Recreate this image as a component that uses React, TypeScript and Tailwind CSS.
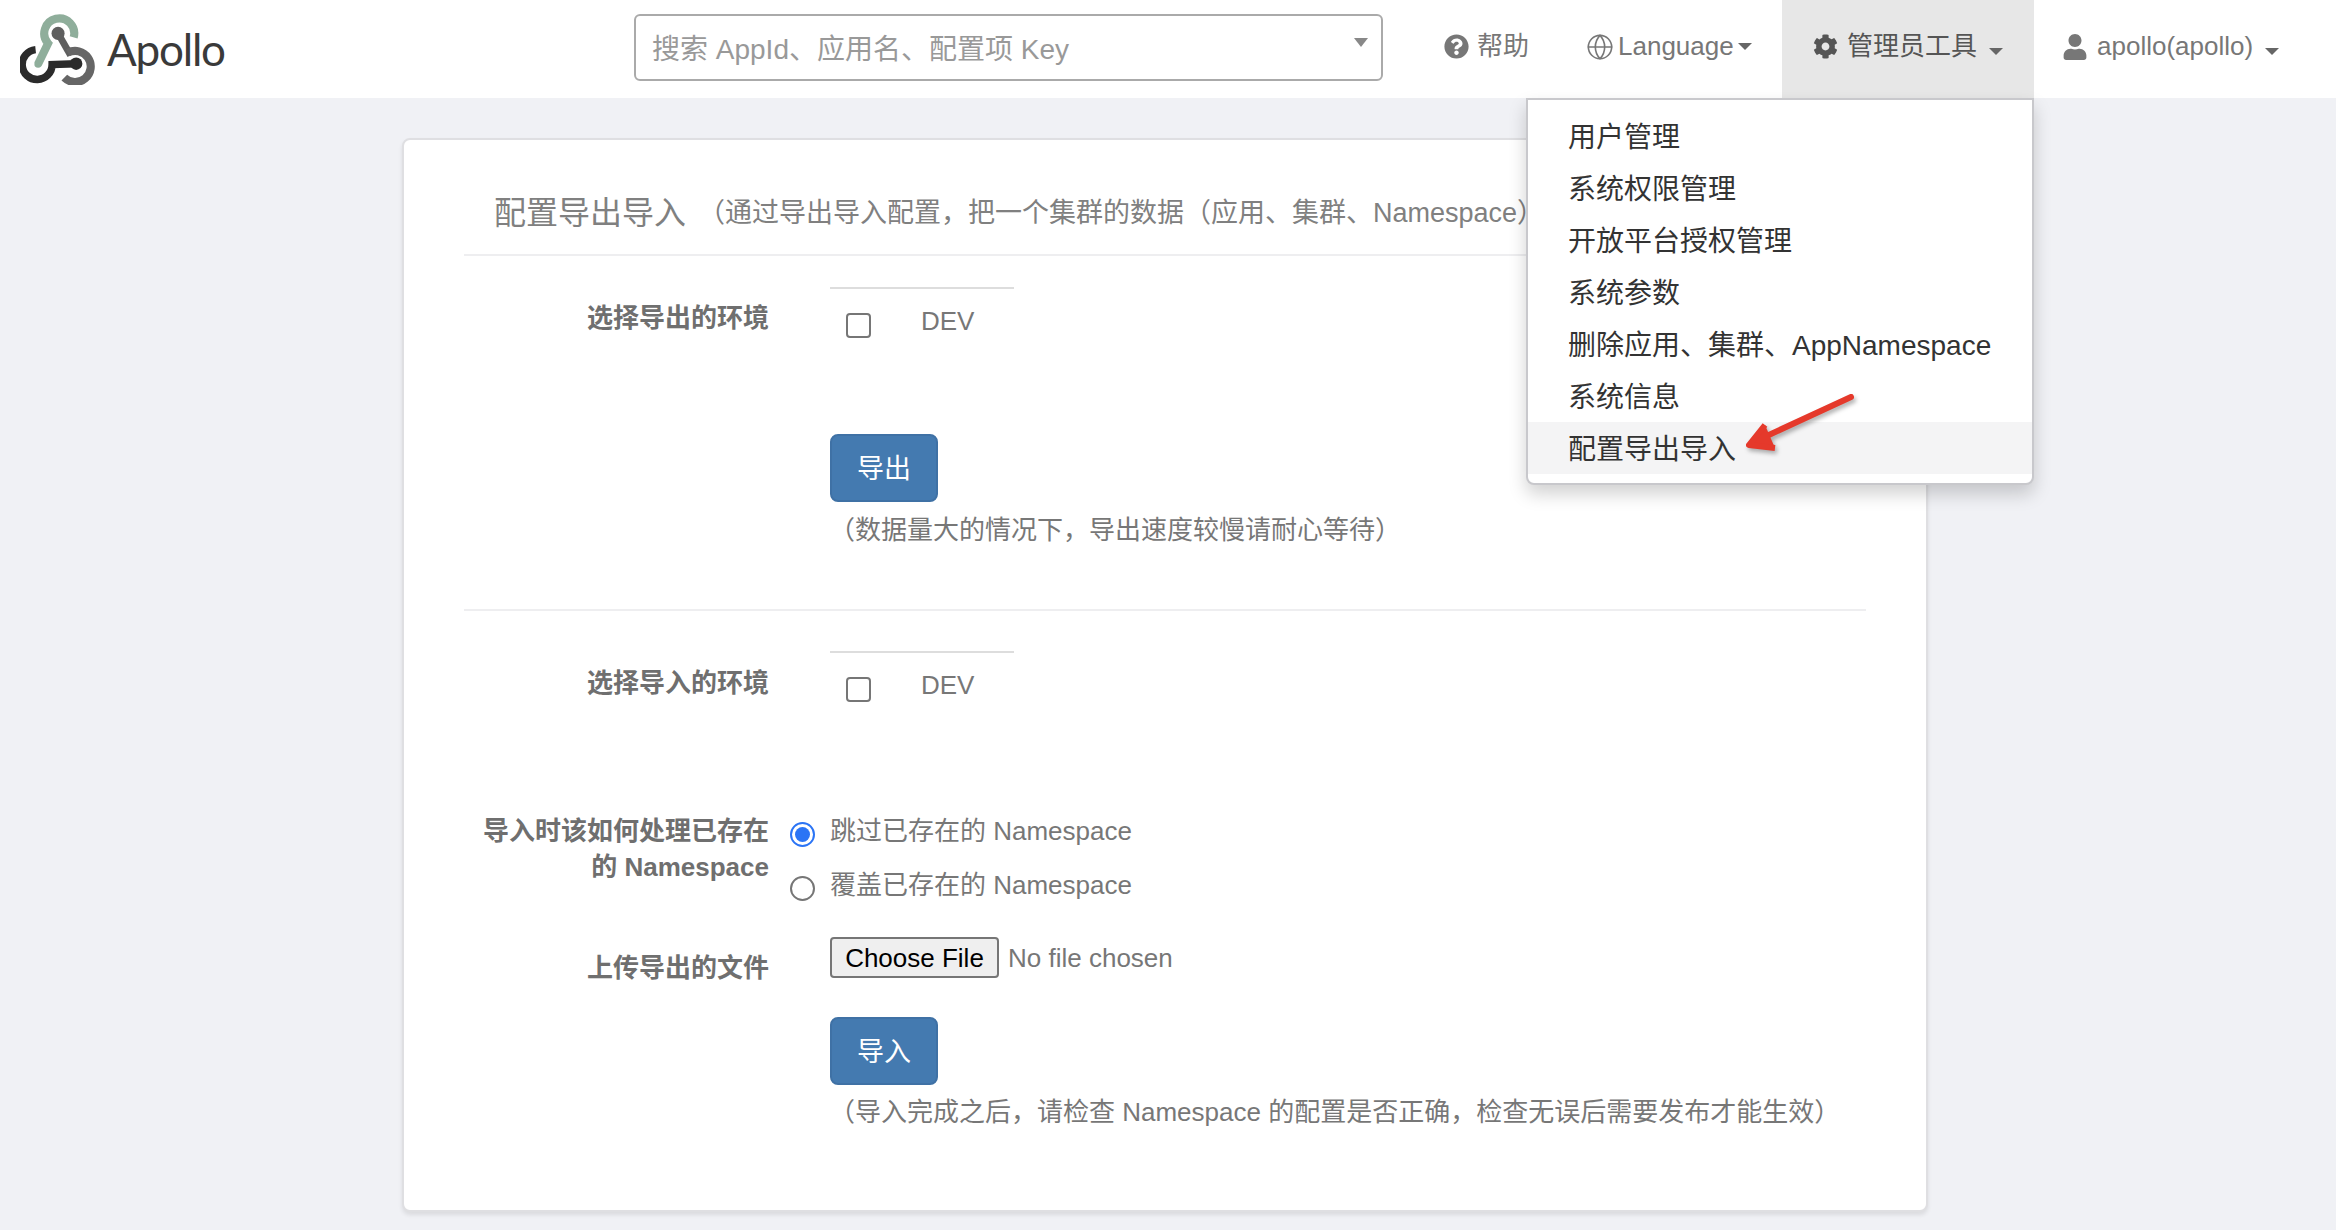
import React from "react";
import { FaQuestionCircle, FaCog, FaUser } from "react-icons/fa";
import { Globe } from "lucide-react";

const Caret = () => (
  <span className="inline-block w-0 h-0 border-x-[7px] border-x-transparent border-t-[7px] border-t-[#666]" />
);

const Logo = () => (
  <svg width="78" height="72" viewBox="50 25 250 230" fill="none">
    <path d="M222 103 A48 48 0 1 0 140 122 L108 188" stroke="#8fae9b" strokeWidth="26" />
    <circle cx="108" cy="188" r="12" fill="#8fae9b" />
    <path d="M172 90 L212 160" stroke="#5f5f5f" strokeWidth="22" />
    <path d="M203 152 A50 50 0 1 1 192 232" stroke="#666" strokeWidth="26" />
    <circle cx="172" cy="90" r="21" fill="#5f5f5f" />
    <path d="M100 142 A48 48 0 1 0 153 190 L230 187" stroke="#2b2b2b" strokeWidth="24" />
    <circle cx="230" cy="187" r="20" fill="#2b2b2b" />
  </svg>
);

const Checkbox = () => (
  <input type="checkbox" className="appearance-none block w-[25px] h-[25px] border-2 border-[#767676] rounded-[4px] bg-white" />
);

const EnvTable = () => (
  <div className="w-[184px] border-t-2 border-[#ddd] flex items-start pl-[16px] pt-[14px] h-[60px]">
    <div className="mt-[10px]"><Checkbox /></div>
    <span className="ml-[50px] leading-[36px] text-[#777]">DEV</span>
  </div>
);

const Label = ({ children, cls }: { children: React.ReactNode; cls?: string }) => (
  <div className={"w-[306px] shrink-0 text-right font-bold leading-[36px] text-[#6f6f6f] -translate-x-[1px] " + (cls || "")}>{children}</div>
);

const PrimaryBtn = ({ children }: { children: React.ReactNode }) => (
  <button className="block w-[108px] h-[68px] pt-[2px] rounded-[8px] bg-[#447ab0] border-2 border-[#3f71a5] text-white text-[27px]">{children}</button>
);

const menu = ["用户管理", "系统权限管理", "开放平台授权管理", "系统参数", "删除应用、集群、AppNamespace", "系统信息", "配置导出导入"];

export default function App() {
  return (
    <div className="relative min-h-[1230px] bg-[#f0f1f5] font-['Liberation_Sans','Noto_Sans_CJK_SC',sans-serif] text-[26px] text-[#777] overflow-hidden">
      <nav className="h-[98px] bg-white flex items-stretch">
        <div className="w-[634px] shrink-0 flex items-center pl-[20px]">
          <Logo />
          <span className="ml-[9px] font-['Lato','Liberation_Sans',sans-serif] text-[44px] text-[#3a3a3a] tracking-[-1.2px] leading-none">Apollo</span>
        </div>
        <div className="mt-[14px] w-[749px] h-[67px] shrink-0 border-2 border-[#aaa] rounded-[6px] relative flex items-center pl-[16px] pt-[5px] text-[28px] text-[#999]">
          搜索 AppId、应用名、配置项 Key
          <span className="absolute right-[13px] top-[22px] w-0 h-0 border-x-[7px] border-x-transparent border-t-[9px] border-t-[#888]" />
        </div>
        <div className="ml-[31px] w-[144px] pl-[30px] flex items-center gap-[8px] pb-[5px]">
          <FaQuestionCircle className="w-[25px] h-[25px]" />
          <span>帮助</span>
        </div>
        <div className="w-[224px] pl-[28px] flex items-center gap-[4px] pb-[5px]">
          <Globe className="w-[28px] h-[28px]" strokeWidth={1.4} />
          <span>Language</span>
          <Caret />
        </div>
        <div className="relative w-[252px] bg-[#e7e7e7] pl-[31px] flex items-center gap-[9px] pb-[5px] text-[#555]">
          <FaCog className="w-[25px] h-[25px]" />
          <span>管理员工具</span>
          <span className="ml-[3px]"><Caret /></span>
          <div className="absolute right-0 top-full w-[508px] h-[387px] bg-white border-2 border-[#c8c8cc] rounded-b-[8px] shadow-[0_9px_18px_rgba(0,0,0,0.18)] pt-[10px] z-10 text-[28px] text-[#333]">
            {menu.map((m, i) => (
              <div key={m} className={"h-[52px] pl-[40px] pt-[4px] flex items-center " + (i === 6 ? "bg-[#f4f4f5]" : "")}>{m}</div>
            ))}
          </div>
        </div>
        <div className="pl-[28px] flex items-center gap-[9px] pb-[5px]">
          <FaUser className="w-[26px] h-[26px]" />
          <span>apollo(apollo)</span>
          <span className="ml-[3px]"><Caret /></span>
        </div>
      </nav>

      <main className="ml-[402px] mt-[40px] w-[1526px] h-[1074px] bg-white border-2 border-[#dfdfe2] rounded-[8px] shadow-[0_3px_4px_rgba(0,0,0,0.09)] px-[60px]">
        <div className="h-[114px] pt-[32px] pl-[30px] flex items-center whitespace-nowrap text-[#808080] overflow-hidden">
          <span className="text-[32px]">配置导出导入</span>
          <span className="ml-[12px] text-[27px]">（通过导出导入配置，把一个集群的数据（应用、集群、Namespace）</span>
        </div>
        <div className="h-[2px] bg-[#eeeef0]" />

        <section className="mt-[31px] h-[147px] flex items-start">
          <Label cls="pt-[13px]">选择导出的环境</Label>
          <div className="ml-[60px]"><EnvTable /></div>
        </section>
        <div className="ml-[366px]">
          <PrimaryBtn>导出</PrimaryBtn>
          <p className="mt-[10px] -ml-[1px] leading-[36px]">（数据量大的情况下，导出速度较慢请耐心等待）</p>
        </div>

        <div className="mt-[61px] h-[2px] bg-[#eeeef0]" />

        <section className="mt-[40px] h-[162px] flex items-start">
          <Label cls="pt-[14px]">选择导入的环境</Label>
          <div className="ml-[60px]"><EnvTable /></div>
        </section>

        <section className="flex items-start">
          <Label>导入时该如何处理已存在<br />的 Namespace</Label>
          <div className="ml-[20px] flex flex-col gap-[18px]">
            <label className="flex items-start leading-[36px]">
              <span className="mt-[9px] w-[25px] h-[25px] rounded-full border-2 border-[#2b74f5] flex items-center justify-center">
                <span className="w-[15px] h-[15px] rounded-full bg-[#2b74f5]" />
              </span>
              <span className="ml-[15px]">跳过已存在的 Namespace</span>
            </label>
            <label className="flex items-start leading-[36px]">
              <span className="mt-[9px] w-[25px] h-[25px] rounded-full border-2 border-[#767676] bg-white" />
              <span className="ml-[15px]">覆盖已存在的 Namespace</span>
            </label>
          </div>
        </section>

        <section className="mt-[34px] flex items-start">
          <Label cls="pt-[13px]">上传导出的文件</Label>
          <div className="ml-[60px] flex items-center h-[41px]">
            <button className="w-[169px] h-[41px] bg-[#efefef] border-2 border-[#767676] rounded-[4px] text-black text-[26px]">Choose File</button>
            <span className="ml-[9px] pt-[2px]">No file chosen</span>
          </div>
        </section>

        <div className="ml-[366px] mt-[31px]">
          <PrimaryBtn>导入</PrimaryBtn>
          <p className="mt-[9px] -ml-[1px] leading-[36px] whitespace-nowrap">（导入完成之后，请检查 Namespace 的配置是否正确，检查无误后需要发布才能生效）</p>
        </div>
      </main>

      <svg className="absolute left-[1740px] top-[390px] z-20 drop-shadow-[2px_3px_2px_rgba(0,0,0,0.3)]" width="120" height="64" viewBox="0 0 120 64" fill="none">
        <path d="M111 7 L18 50" stroke="#e5392b" strokeWidth="6" strokeLinecap="round" />
        <path d="M25 35 L9 55 L35 58" fill="#e5392b" stroke="#e5392b" strokeWidth="6" strokeLinejoin="round" />
      </svg>
    </div>
  );
}
